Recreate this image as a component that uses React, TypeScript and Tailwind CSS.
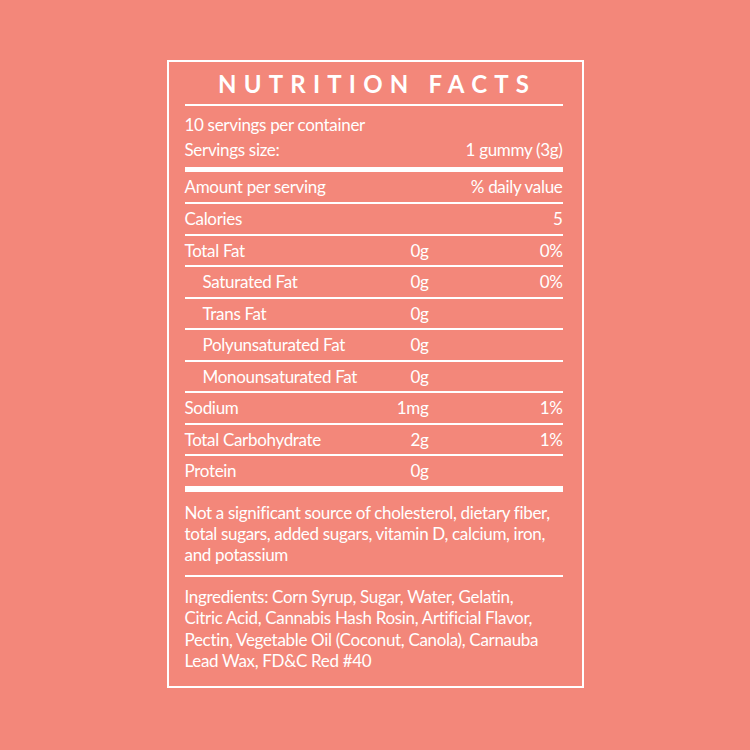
import React from 'react';

interface Row {
  label: string;
  amount?: string;
  daily?: string;
  indent?: boolean;
}

const rows: Row[] = [
  { label: 'Calories', daily: '5' },
  { label: 'Total Fat', amount: '0g', daily: '0%' },
  { label: 'Saturated Fat', amount: '0g', daily: '0%', indent: true },
  { label: 'Trans Fat', amount: '0g', indent: true },
  { label: 'Polyunsaturated Fat', amount: '0g', indent: true },
  { label: 'Monounsaturated Fat', amount: '0g', indent: true },
  { label: 'Sodium', amount: '1mg', daily: '1%' },
  { label: 'Total Carbohydrate', amount: '2g', daily: '1%' },
  { label: 'Protein', amount: '0g' },
];

const ingredients = [
  'Ingredients: Corn Syrup, Sugar, Water, Gelatin,',
  'Citric Acid, Cannabis Hash Rosin, Artificial Flavor,',
  'Pectin, Vegetable Oil (Coconut, Canola), Carnauba',
  'Lead Wax, FD&C Red #40',
];

const App: React.FC = () => {
  return (
    <div
      className="min-h-screen w-full bg-[#F3877A] flex justify-center pt-[60px] text-white"
      style={{ fontFamily: 'Lato, "Noto Sans", sans-serif' }}
    >
      <div className="w-[417px] h-[628px] border-2 border-white pl-[16px] pr-[19px] flex flex-col tracking-[-0.02em]">
        {/* Title */}
        <div className="h-[42px] flex items-end justify-center pb-[8px]">
          <h1 className="text-[24px] leading-none font-bold tracking-[0.3em] pl-[0.3em]">NUTRITION FACTS</h1>
        </div>
        <div className="h-[2px] bg-white" />

        {/* Servings */}
        <div className="text-[17px] leading-[25px] pt-[6px] pb-[5px]">
          <div>10 servings per container</div>
          <div className="flex justify-between">
            <span>Servings size:</span>
            <span>1 gummy (3g)</span>
          </div>
        </div>
        <div className="h-[5px] bg-white" />

        <div className="h-[30px] flex items-center justify-between text-[17px]">
          <span>Amount per serving</span>
          <span>% daily value</span>
        </div>

        {/* Nutrient rows */}
        {rows.map((row) => (
          <div key={row.label} className="border-t-2 border-white h-[31.5px] flex items-center text-[17px]">
            <span className={`flex-1 ${row.indent ? 'pl-[18px]' : ''}`}>{row.label}</span>
            <span className="w-[60px] text-right">{row.amount}</span>
            <span className="w-[134px] text-right">{row.daily}</span>
          </div>
        ))}
        <div className="h-[6px] bg-white" />

        {/* Footnote */}
        <p className="text-[17px] leading-[21px] pt-[10px] pb-[10px]">
          Not a significant source of cholesterol, dietary fiber, total sugars, added sugars, vitamin D, calcium, iron, and potassium
        </p>
        <div className="h-[2px] bg-white" />

        <div className="text-[17px] leading-[21.5px] pt-[9px]">
          {ingredients.map((line) => (
            <div key={line}>{line}</div>
          ))}
        </div>
      </div>
    </div>
  );
};

export default App;
